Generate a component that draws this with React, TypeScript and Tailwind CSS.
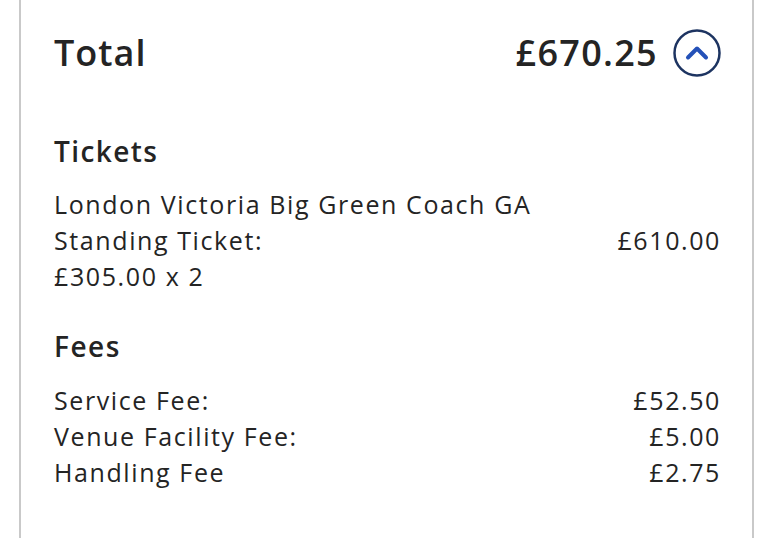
import React from "react";

export default function App() {
  const font = { fontFamily: "'Open Sans', Lato, sans-serif" };
  return (
    <div className="w-[768px] h-[538px] bg-white overflow-hidden pl-[19px] pr-[14px]" style={font}>
      <div className="h-full border-x-2 border-[#c9c9c9] pl-[33px] pr-[31px] pt-[22px] text-[#242424]">
        <div className="flex items-center justify-between h-[62px]">
          <div className="text-[36px] font-semibold leading-none tracking-[1px]">Total</div>
          <div className="flex items-center gap-[15px]">
            <div className="text-[36px] font-semibold leading-none tracking-[1.3px]">£670.25</div>
            <svg width="48" height="48" viewBox="0 0 48 48">
              <circle cx="24" cy="24" r="22.5" fill="none" stroke="#1d3461" strokeWidth="2.5" />
              <path d="M15 28.5 L24 19.5 L33 28.5" fill="none" stroke="#2451b8" strokeWidth="4" strokeLinecap="round" strokeLinejoin="round" />
            </svg>
          </div>
        </div>
        <div className="mt-[49px] text-[28px] font-semibold leading-[36px] tracking-[1.4px]">Tickets</div>
        <div className="mt-[17px] flex justify-between text-[25px] leading-[36px] tracking-[1.6px]">
          <div>
            <div>London Victoria Big Green Coach GA</div>
            <div>Standing Ticket:</div>
            <div>£305.00 x 2</div>
          </div>
          <div className="pt-[36px]">£610.00</div>
        </div>
        <div className="mt-[34px] text-[28px] font-semibold leading-[36px] tracking-[1.5px]">Fees</div>
        <div className="mt-[18px] text-[25px] leading-[36px] tracking-[1.6px]">
          <div className="flex justify-between"><span>Service Fee:</span><span>£52.50</span></div>
          <div className="flex justify-between"><span>Venue Facility Fee:</span><span>£5.00</span></div>
          <div className="flex justify-between"><span>Handling Fee</span><span>£2.75</span></div>
        </div>
      </div>
    </div>
  );
}
